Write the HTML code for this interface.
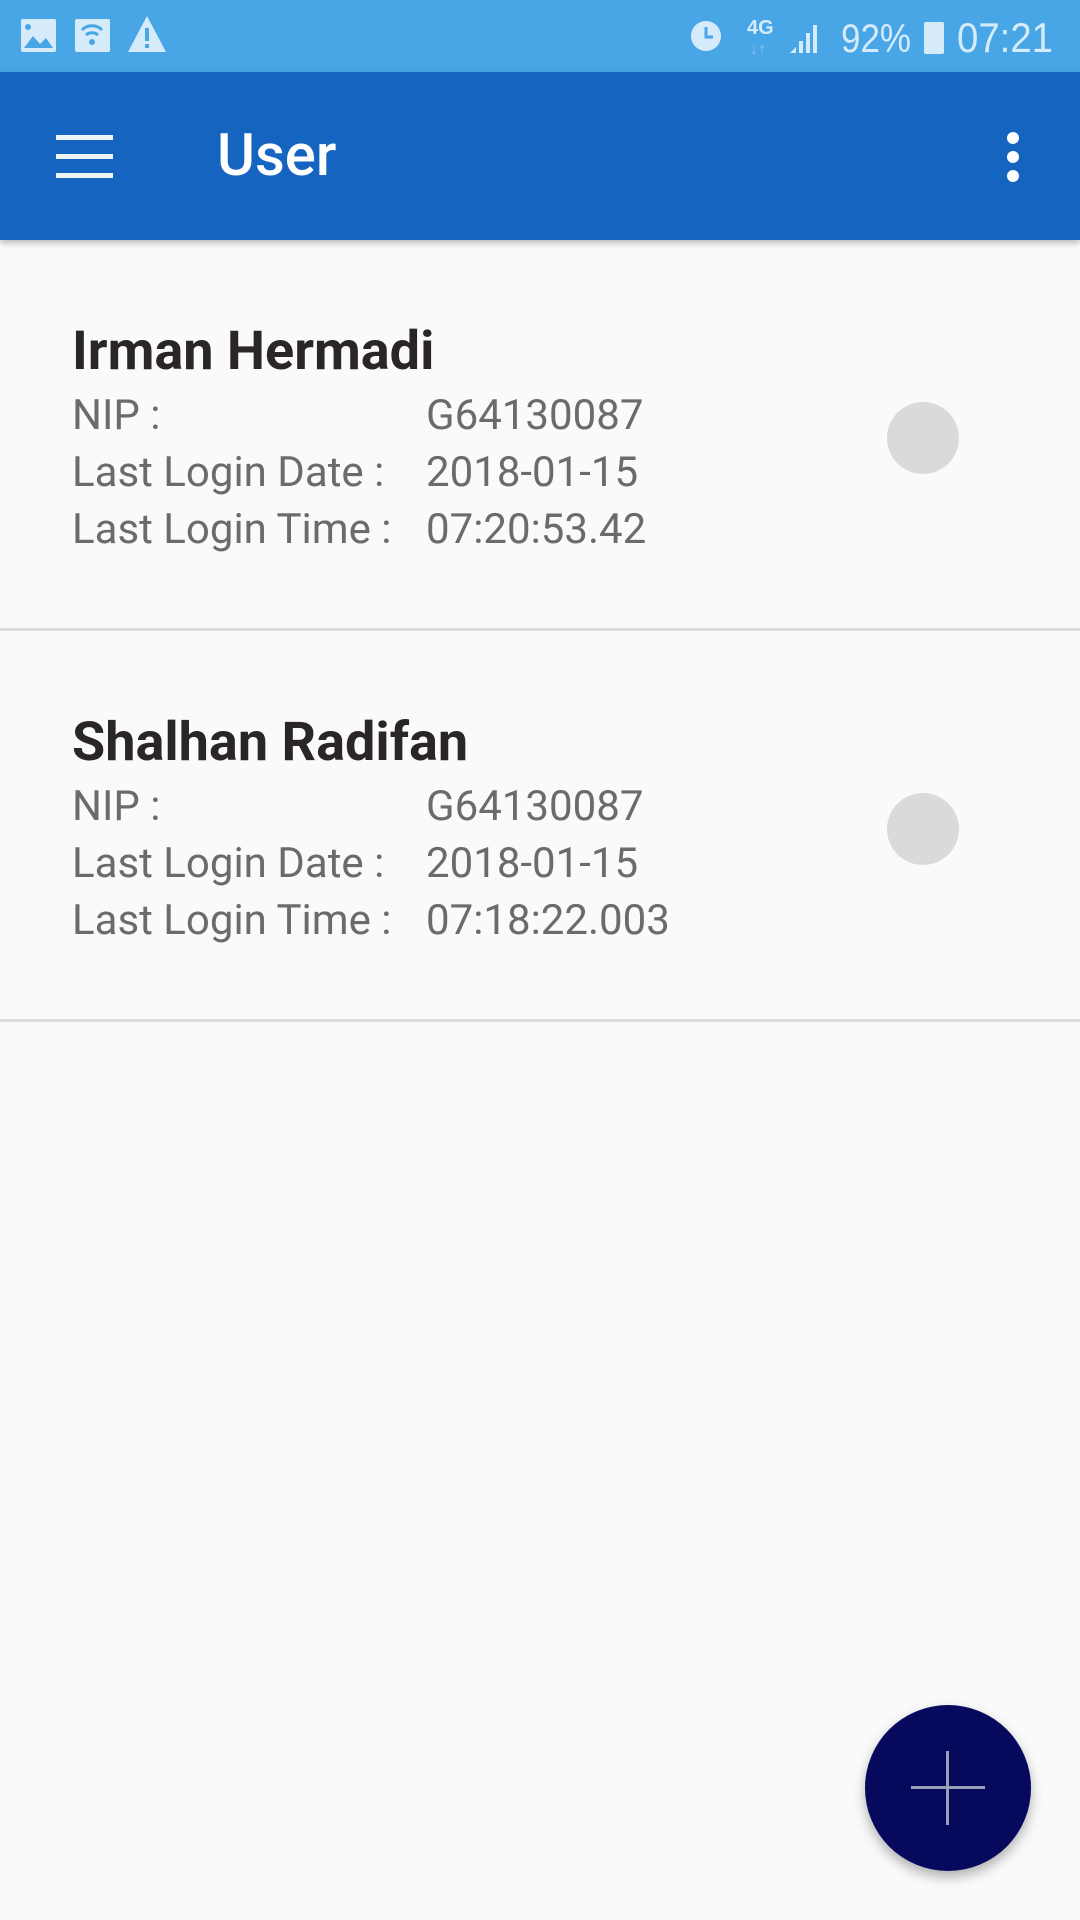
<!DOCTYPE html>
<html><head><meta charset="utf-8"><style>
*{margin:0;padding:0;box-sizing:border-box}
body{width:1080px;height:1920px;background:#FAFAFA;position:relative;overflow:hidden;font-family:"Roboto","Liberation Sans",sans-serif}
.sb{position:absolute;left:0;top:0;width:1080px;height:72px;background:#48A6E6}
.ab{position:absolute;left:0;top:72px;width:1080px;height:168px;background:#1565C0;box-shadow:0 3px 6px rgba(0,0,0,.25)}
.t{position:absolute;color:#fff}
.name{position:absolute;left:72px;font-size:54px;font-weight:bold;color:#2b2626}
.row{position:absolute;left:72px;font-size:42px;color:#6b6b6b}
.v{position:absolute;left:354px;white-space:nowrap}
.c{position:absolute;width:72px;height:72px;border-radius:50%;background:#DADADA;left:887px}
.div{position:absolute;left:0;width:1080px;height:3px;background:#DDDDDD}
</style></head><body>
<div class="sb">
<svg width="1080" height="72" style="position:absolute;left:0;top:0">
<g fill="#d6ebfa">
<rect x="21" y="19" width="35" height="33" rx="2"/>
<rect x="75" y="19" width="35" height="33" rx="2"/>
<polygon points="147,16 128,52 166,52"/>
<circle cx="706" cy="36" r="15"/>
<rect x="924" y="22" width="20" height="32" rx="2"/>
<polygon points="790,53 796,47 796,53"/><rect x="799" y="41" width="4" height="12"/><rect x="806" y="33" width="4" height="20"/><rect x="813" y="25" width="4" height="28"/>
</g>
<g fill="#48A6E6"><polygon points="24,48 33,36 40,44 46,38 53,48"/><circle cx="28" cy="27" r="3"/><path d="M82 30 a14 14 0 0 1 20 0" stroke="#48A6E6" stroke-width="3" fill="none"/><path d="M86 35 a9 9 0 0 1 12 0" stroke="#48A6E6" stroke-width="3" fill="none"/><circle cx="92" cy="42" r="3"/><rect x="145" y="28" width="4" height="13"/><rect x="145" y="44" width="4" height="4"/><path d="M706 27 v10 h7" stroke="#48A6E6" stroke-width="3" fill="none"/></g>
<text x="747" y="34" font-size="20" font-weight="bold" fill="#d6ebfa" font-family="Liberation Sans">4G</text>
<text x="750" y="54" font-size="16" fill="#8fc6ee" font-family="Liberation Sans">↓↑</text>
<text x="841" y="52" font-size="40" fill="#d6ebfa" font-family="Liberation Sans" textLength="70" lengthAdjust="spacingAndGlyphs">92%</text>
<text x="957" y="52" font-size="42" fill="#d6ebfa" font-family="Liberation Sans" textLength="96" lengthAdjust="spacingAndGlyphs">07:21</text>
</svg>
</div>
<div class="ab">
<div style="position:absolute;left:56px;top:63px;width:57px;height:5px;background:#eef3f8"></div>
<div style="position:absolute;left:56px;top:82px;width:57px;height:5px;background:#eef3f8"></div>
<div style="position:absolute;left:56px;top:101px;width:57px;height:5px;background:#eef3f8"></div>
<div class="t" style="left:217px;top:50px;font-size:58px;font-weight:500">User</div>
<div style="position:absolute;left:1007px;top:60px;width:12px;height:12px;border-radius:50%;background:#fff"></div>
<div style="position:absolute;left:1007px;top:79px;width:12px;height:12px;border-radius:50%;background:#fff"></div>
<div style="position:absolute;left:1007px;top:98px;width:12px;height:12px;border-radius:50%;background:#fff"></div>
</div>

<div class="name" style="top:320px">Irman Hermadi</div>
<div class="row" style="top:391px">NIP :<span class="v">G64130087</span></div>
<div class="row" style="top:448px">Last Login Date :<span class="v">2018-01-15</span></div>
<div class="row" style="top:505px">Last Login Time :<span class="v">07:20:53.42</span></div>
<div class="c" style="top:402px"></div>
<div class="div" style="top:628px"></div>

<div class="name" style="top:711px">Shalhan Radifan</div>
<div class="row" style="top:782px">NIP :<span class="v">G64130087</span></div>
<div class="row" style="top:839px">Last Login Date :<span class="v">2018-01-15</span></div>
<div class="row" style="top:896px">Last Login Time :<span class="v">07:18:22.003</span></div>
<div class="c" style="top:793px"></div>
<div class="div" style="top:1019px"></div>

<div style="position:absolute;left:865px;top:1705px;width:166px;height:166px;border-radius:50%;background:#070A5C;box-shadow:0 6px 12px rgba(0,0,0,.3)"></div>
<div style="position:absolute;left:911px;top:1786px;width:74px;height:3px;background:#9aa0b8"></div>
<div style="position:absolute;left:946px;top:1751px;width:3px;height:74px;background:#9aa0b8"></div>
</body></html>
